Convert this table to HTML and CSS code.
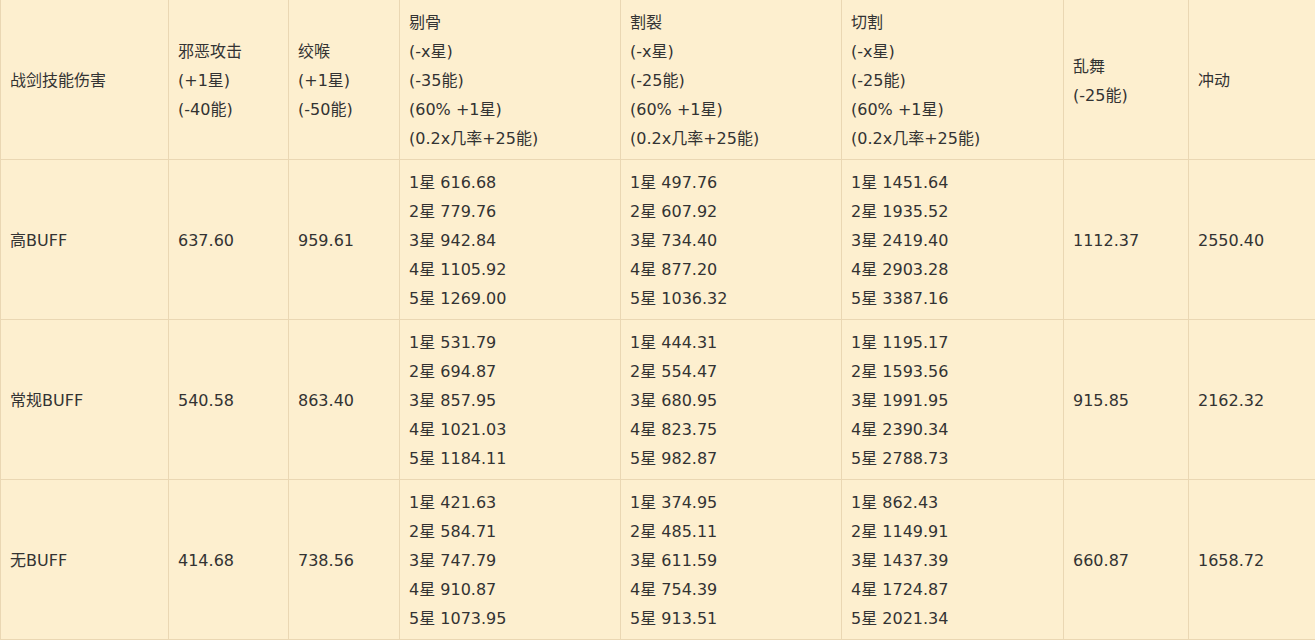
FILE: index.html
```html
<!DOCTYPE html>
<html lang="zh">
<head>
<meta charset="utf-8">
<link rel="stylesheet" href="styles.css">
</head>
<body>
<table class="dmg">
<colgroup>
<col class="c1"><col class="c2"><col class="c3"><col class="c4"><col class="c5"><col class="c6"><col class="c7"><col class="c8">
</colgroup>
<tr class="head">
<td>战剑技能伤害</td>
<td>邪恶攻击<br>(+1星)<br>(-40能)</td>
<td>绞喉<br>(+1星)<br>(-50能)</td>
<td>剔骨<br>(-x星)<br>(-35能)<br>(60% +1星)<br>(0.2x几率+25能)</td>
<td>割裂<br>(-x星)<br>(-25能)<br>(60% +1星)<br>(0.2x几率+25能)</td>
<td>切割<br>(-x星)<br>(-25能)<br>(60% +1星)<br>(0.2x几率+25能)</td>
<td>乱舞<br>(-25能)</td>
<td>冲动</td>
</tr>
<tr>
<td>高BUFF</td>
<td>637.60</td>
<td>959.61</td>
<td>1星 616.68<br>2星 779.76<br>3星 942.84<br>4星 1105.92<br>5星 1269.00</td>
<td>1星 497.76<br>2星 607.92<br>3星 734.40<br>4星 877.20<br>5星 1036.32</td>
<td>1星 1451.64<br>2星 1935.52<br>3星 2419.40<br>4星 2903.28<br>5星 3387.16</td>
<td>1112.37</td>
<td>2550.40</td>
</tr>
<tr>
<td>常规BUFF</td>
<td>540.58</td>
<td>863.40</td>
<td>1星 531.79<br>2星 694.87<br>3星 857.95<br>4星 1021.03<br>5星 1184.11</td>
<td>1星 444.31<br>2星 554.47<br>3星 680.95<br>4星 823.75<br>5星 982.87</td>
<td>1星 1195.17<br>2星 1593.56<br>3星 1991.95<br>4星 2390.34<br>5星 2788.73</td>
<td>915.85</td>
<td>2162.32</td>
</tr>
<tr>
<td>无BUFF</td>
<td>414.68</td>
<td>738.56</td>
<td>1星 421.63<br>2星 584.71<br>3星 747.79<br>4星 910.87<br>5星 1073.95</td>
<td>1星 374.95<br>2星 485.11<br>3星 611.59<br>4星 754.39<br>5星 913.51</td>
<td>1星 862.43<br>2星 1149.91<br>3星 1437.39<br>4星 1724.87<br>5星 2021.34</td>
<td>660.87</td>
<td>1658.72</td>
</tr>
</table>
</body>
</html>
```
FILE: styles.css
```css
html, body {
  margin: 0;
  padding: 0;
  background: #ffffff;
}
.dmg {
  border-collapse: collapse;
  table-layout: fixed;
  width: 1315px;
  background: #fdefcf;
  font-family: "DejaVu Sans", "Noto Sans CJK SC", sans-serif;
  font-size: 16px;
  color: #333333;
}
.dmg td {
  border: 1px solid #ead7b3;
  padding: 8px 9px 6px 9px;
  line-height: 29px;
  vertical-align: middle;
  text-align: left;
  height: 145px;
  white-space: nowrap;
}
.dmg .head td {
  border-top: none;
}
.c1 { width: 168px; }
.c2 { width: 120px; }
.c3 { width: 111px; }
.c4 { width: 221px; }
.c5 { width: 221px; }
.c6 { width: 222px; }
.c7 { width: 125px; }
.c8 { width: 127px; }
```
